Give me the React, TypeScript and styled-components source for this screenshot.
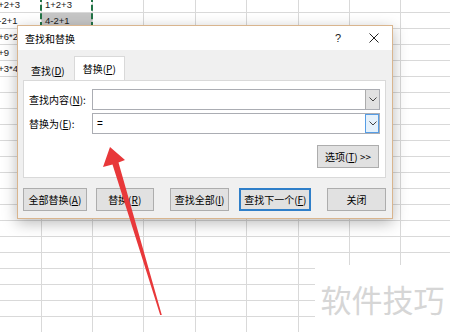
import styled, { createGlobalStyle } from "styled-components";

const GlobalStyle = createGlobalStyle`
  html, body {
    margin: 0;
    padding: 0;
    background: #ffffff;
    overflow: hidden;
  }
`;

const CJK = `"Noto Sans CJK SC", "Noto Sans", sans-serif`;

const columns = [52, 51, 51, 52, 51, 52, 51, 51, 60];
const cellText: Record<string, string> = {
  "0-0": "1+2+3",
  "0-1": "1+2+3",
  "1-0": "4-2+1",
  "1-1": "4-2+1",
  "2-0": "2+6*2",
  "3-0": "9+9",
  "4-0": "2+3*4",
};

const Chevron = () => (
  <svg width="8" height="5" viewBox="0 0 8 5">
    <path d="M0.5 0.5 L4 4 L7.5 0.5" fill="none" stroke="#444" strokeWidth="1" />
  </svg>
);

const App = () => {
  const rows = Array.from({ length: 21 }, (_, r) => r);

  return (
    <Page>
      <GlobalStyle />

      <Sheet>
        {rows.map((r) =>
          columns.map((_, c) => (
            <Cell key={`${r}-${c}`} $shaded={r === 1 && c === 1}>
              {cellText[`${r}-${c}`] ?? ""}
            </Cell>
          ))
        )}
      </Sheet>

      <Marquee />

      <Dialog>
        <TitleBar>
          <Title>查找和替换</Title>
          <TitleButton>?</TitleButton>
          <TitleButton>
            <svg width="10" height="10" viewBox="0 0 10 10">
              <path d="M0.5 0.5 L9.5 9.5 M9.5 0.5 L0.5 9.5" stroke="#222" strokeWidth="1" />
            </svg>
          </TitleButton>
        </TitleBar>

        <Body>
          <Tabs>
            <Tab>
              查找(<u>D</u>)
            </Tab>
            <Tab $active>
              替换(<u>P</u>)
            </Tab>
          </Tabs>

          <Panel>
            <FieldRow>
              <Label>
                查找内容(<u>N</u>):
              </Label>
              <Combo>
                <ComboText />
                <DropButton>
                  <Chevron />
                </DropButton>
              </Combo>
            </FieldRow>
            <FieldRow>
              <Label>
                替换为(<u>E</u>):
              </Label>
              <Combo>
                <ComboText>=</ComboText>
                <DropButton $focused>
                  <Chevron />
                </DropButton>
              </Combo>
            </FieldRow>
            <OptionsRow>
              <Button $w={62}>
                选项(<u>T</u>) &gt;&gt;
              </Button>
            </OptionsRow>
          </Panel>

          <ButtonRow>
            <Button $w={64}>
              全部替换(<u>A</u>)
            </Button>
            <Button $w={58} $lead={9}>
              替换(<u>R</u>)
            </Button>
            <Button $w={60} $lead={16}>
              查找全部(<u>I</u>)
            </Button>
            <Button $w={72} $lead={10} $primary>
              查找下一个(<u>F</u>)
            </Button>
            <Button $w={59} $lead={16}>
              关闭
            </Button>
          </ButtonRow>
        </Body>
      </Dialog>

      <Arrow width="450" height="332" viewBox="0 0 450 332">
        <polygon
          points="110,147 125,160 118.5,162.5 161.8,315 160.2,315 112.5,164.5 103,167"
          fill="#e8383a"
        />
      </Arrow>

      <Watermark>软件技巧</Watermark>
    </Page>
  );
};

const Page = styled.div`
  position: relative;
  width: 450px;
  height: 332px;
  overflow: hidden;
  background: #ffffff;
`;

const Sheet = styled.div`
  display: grid;
  grid-template-columns: ${columns.map((w) => `${w}px`).join(" ")};
  grid-auto-rows: 16px;
  margin: -3px 0 0 -10px;
  font-family: "Liberation Sans", Arial, sans-serif;
  font-size: 9.5px;
  color: #1a1a1a;
`;

const Cell = styled.div<{ $shaded?: boolean }>`
  box-sizing: border-box;
  border-right: 1px solid #d9d9d9;
  border-bottom: 1px solid #d9d9d9;
  padding: 0 3px;
  line-height: 15px;
  white-space: nowrap;
  overflow: hidden;
  background: ${({ $shaded }) => ($shaded ? "#c6c6c6" : "transparent")};
`;

const Marquee = styled.div`
  position: absolute;
  left: 40px;
  top: -4px;
  width: 53px;
  height: 32px;
  box-sizing: border-box;
  border: 2px dashed #217346;
`;

const Dialog = styled.div`
  position: absolute;
  left: 17px;
  top: 25px;
  width: 376px;
  height: 194px;
  box-sizing: border-box;
  border: 1px solid #d9b58e;
  background: #f0f0f0;
  box-shadow: 0 4px 14px rgba(0, 0, 0, 0.28);
  display: flex;
  flex-direction: column;
  font-family: ${CJK};
  font-size: 10px;
  color: #000;
`;

const TitleBar = styled.div`
  height: 24px;
  background: #ffffff;
  display: flex;
  align-items: center;
  padding-left: 7px;
`;

const Title = styled.div`
  flex: 1;
`;

const TitleButton = styled.div`
  width: 36px;
  height: 24px;
  display: flex;
  align-items: center;
  justify-content: center;
  font-family: "Liberation Sans", Arial, sans-serif;
  font-size: 11px;
  color: #222;
`;

const Body = styled.div`
  flex: 1;
  padding: 7px 6px 0 5px;
  display: flex;
  flex-direction: column;
`;

const Tabs = styled.div`
  display: flex;
  align-items: flex-end;
  height: 23px;
`;

const Tab = styled.div<{ $active?: boolean }>`
  box-sizing: border-box;
  height: ${({ $active }) => ($active ? "24px" : "21px")};
  padding: 0 ${({ $active }) => ($active ? "8px" : "6px")};
  display: flex;
  align-items: center;
  background: ${({ $active }) => ($active ? "#ffffff" : "transparent")};
  border: 1px solid ${({ $active }) => ($active ? "#d9d9d9" : "transparent")};
  border-bottom: none;
  margin-left: ${({ $active }) => ($active ? "2px" : "1px")};
  position: relative;
  z-index: 1;
`;

const Panel = styled.div`
  height: 98px;
  box-sizing: border-box;
  background: #ffffff;
  border: 1px solid #d9d9d9;
  padding: 8px 5px 0 5px;
  display: flex;
  flex-direction: column;
  gap: 3px;
`;

const FieldRow = styled.div`
  display: grid;
  grid-template-columns: 63px 1fr;
  align-items: center;
  height: 21px;
`;

const Label = styled.div`
  white-space: nowrap;
`;

const Combo = styled.div`
  display: flex;
  height: 21px;
  box-sizing: border-box;
  border: 1px solid #abadb3;
  background: #ffffff;
`;

const ComboText = styled.div`
  flex: 1;
  padding-left: 4px;
  line-height: 19px;
  font-family: "Liberation Sans", Arial, sans-serif;
  font-size: 10px;
`;

const DropButton = styled.div<{ $focused?: boolean }>`
  width: 14px;
  display: flex;
  align-items: center;
  justify-content: center;
  box-sizing: border-box;
  background: ${({ $focused }) => ($focused ? "#e5f1fb" : "#e1e1e1")};
  border-left: 1px solid ${({ $focused }) => ($focused ? "#569de5" : "#acacac")};
  outline: ${({ $focused }) => ($focused ? "1px solid #569de5" : "none")};
  outline-offset: -1px;
`;

const OptionsRow = styled.div`
  display: flex;
  justify-content: flex-end;
  margin-top: 8px;
  padding-right: 1px;
`;

const ButtonRow = styled.div`
  display: flex;
  margin-top: 10px;
`;

const Button = styled.div<{ $w: number; $lead?: number; $primary?: boolean }>`
  width: ${({ $w }) => $w}px;
  height: 23px;
  margin-left: ${({ $lead }) => $lead ?? 0}px;
  box-sizing: border-box;
  display: flex;
  align-items: center;
  justify-content: center;
  white-space: nowrap;
  background: #e1e1e1;
  border: 1px solid ${({ $primary }) => ($primary ? "#2f7fc9" : "#adadad")};
  box-shadow: ${({ $primary }) => ($primary ? "inset 0 0 0 1px #2f7fc9" : "none")};
`;

const Arrow = styled.svg`
  position: absolute;
  left: 0;
  top: 0;
  pointer-events: none;
`;

const Watermark = styled.div`
  position: absolute;
  left: 315px;
  top: 265px;
  width: 135px;
  height: 67px;
  background: #ffffff;
  display: flex;
  align-items: center;
  justify-content: center;
  font-family: ${CJK};
  font-size: 31px;
  color: #d6d6d6;
`;

export default App;
